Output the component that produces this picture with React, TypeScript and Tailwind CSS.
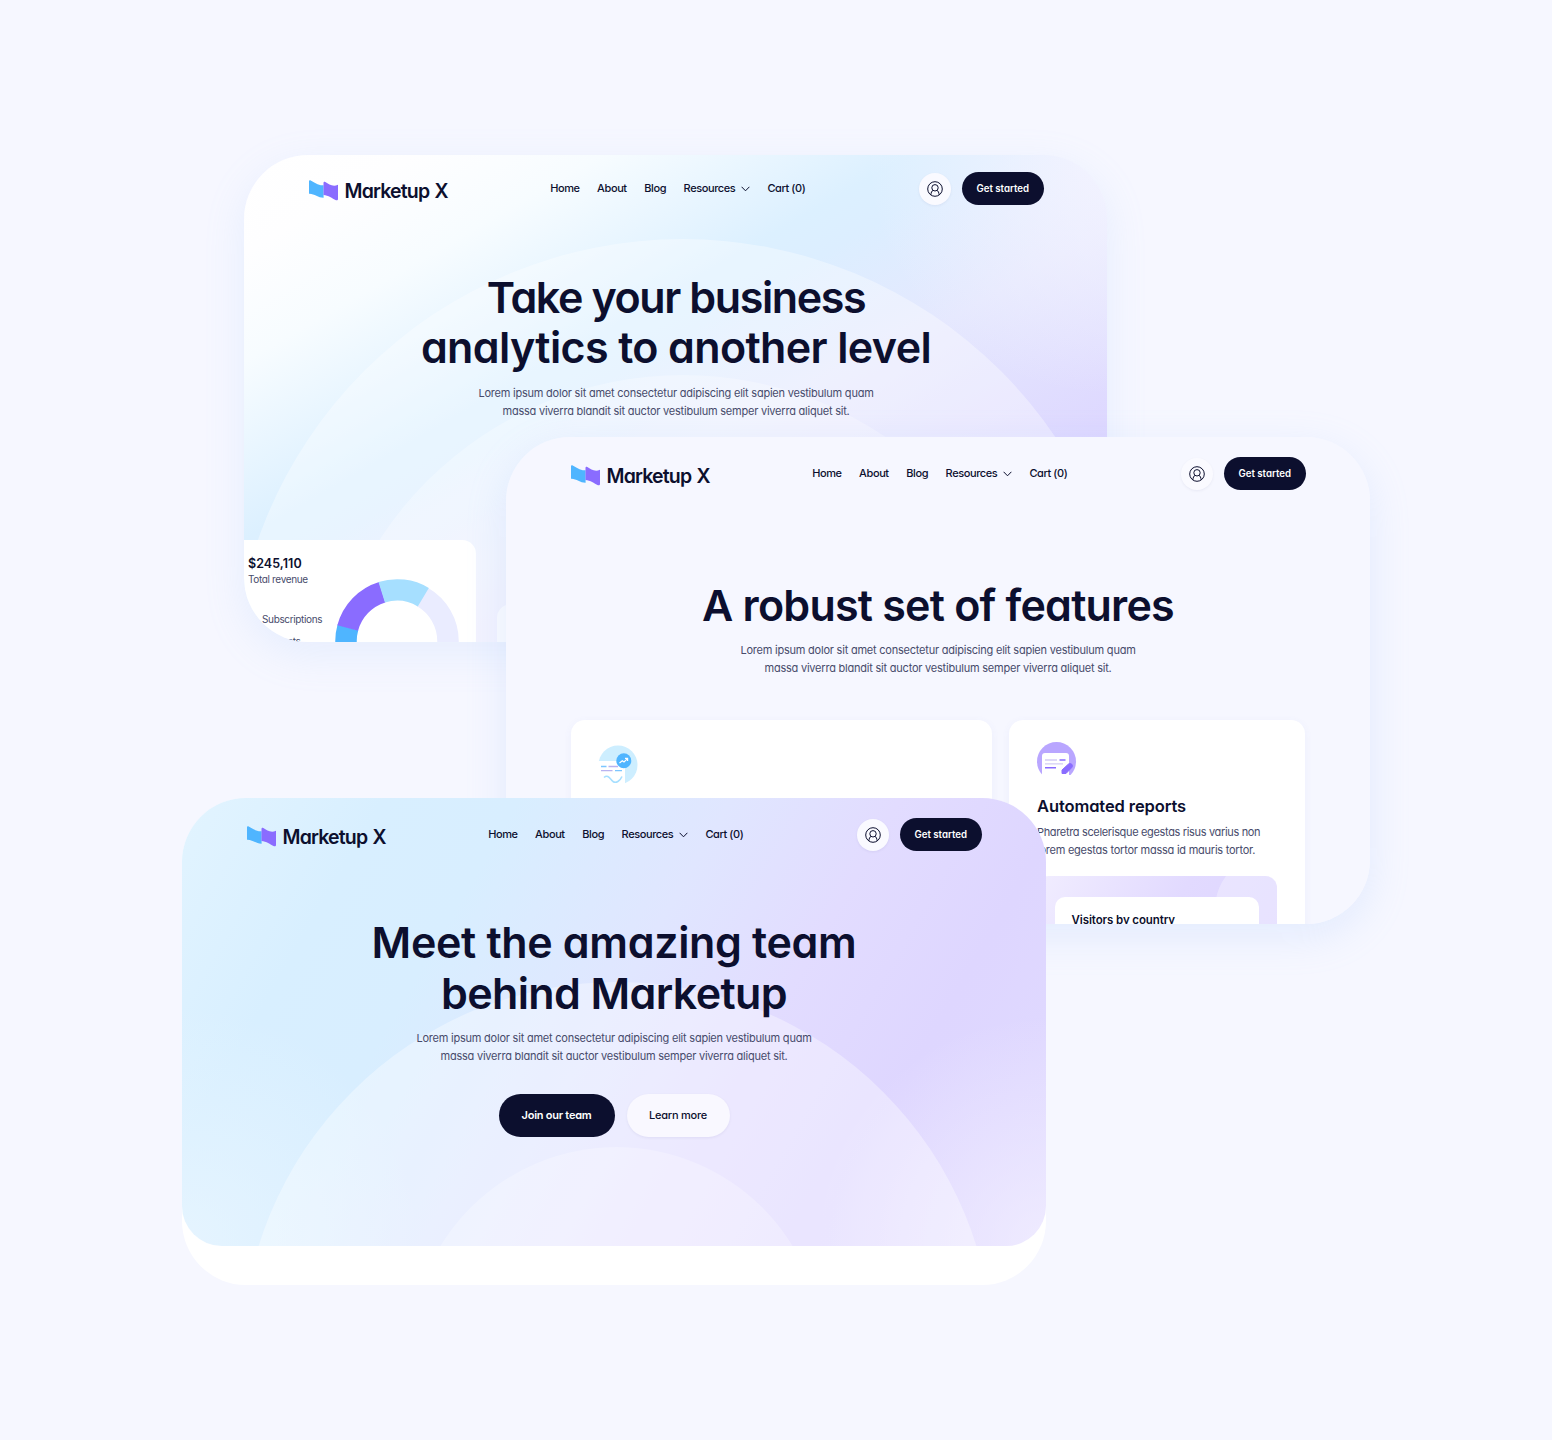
import React from "react";

const NAV = ["Home", "About", "Blog"];

function Logo() {
  return (
    <div className="flex items-center gap-[6.500px]">
      <svg width="29" height="21" viewBox="0 0 29 21" className="shrink-0">
        <path d="M0 1.500C0 .3.8-.1 1.700.4 5.500 2.300 9 5.600 14.600 5.200V17.700C9.500 17.900 5 13.300 0 13.700Z" fill="#4fb5ff" />
        <path d="M14.500 3.100C14.500 1.900 15.400 1.500 16.300 2 20 3.900 23.500 7.400 29 4.800V19C29 20.200 28 20.600 27 20.200 23 18.500 19.500 15.200 14.500 15Z" fill="#8a6cff" />
      </svg>
      <span className="whitespace-nowrap text-[19.500px] font-semibold leading-6 tracking-[-0.82px] [word-spacing:1px]">Marketup X</span>
    </div>
  );
}

function UserIcon() {
  return (
    <svg width="16" height="16" viewBox="0 0 16 16" fill="none" stroke="#0c0f2e" strokeWidth="1">
      <circle cx="8" cy="8" r="7.300" />
      <circle cx="8" cy="6.800" r="3.200" />
      <path d="M3.900 13.800C4 11.500 4.900 10 6 9.300M12.100 13.800C12 11.500 11.100 10 10 9.300" />
    </svg>
  );
}

function Header() {
  return (
    <header className="relative flex h-[33px] items-center justify-between pl-[65px] pr-[64.500px]">
      <div className="w-[200px] pt-[4px]">
        <Logo />
      </div>
      <nav className="flex items-center gap-[17.500px] whitespace-nowrap pl-[3px] text-[11px] font-medium tracking-[-0.4px]">
        {NAV.map((n) => (
          <a key={n}>{n}</a>
        ))}
        <a className="flex items-center gap-[5.500px]">
          Resources
          <svg width="9" height="6" viewBox="0 0 9 6" fill="none" stroke="#0c0f2e" strokeWidth="1">
            <path d="M.6.8 4.500 4.800 8.400.8" />
          </svg>
        </a>
        <a>Cart (0)</a>
      </nav>
      <div className="flex w-[200px] items-center justify-end gap-[11px]">
        <div className="flex size-8 items-center justify-center rounded-full bg-[#fafaff] shadow-[0_1px_3px_rgba(20,20,80,0.06)]">
          <UserIcon />
        </div>
        <button className="h-[33px] w-[81.500px] whitespace-nowrap rounded-full bg-[#0c0f2e] pt-px text-[9.700px] font-semibold text-white">
          Get started
        </button>
      </div>
    </header>
  );
}

type Line = { text: string; tracking: string };

function Intro({ lines }: { lines: Line[] }) {
  return (
    <div className="relative text-center">
      <h1 className="text-[43px] font-semibold leading-[50.500px]">
        {lines.map((l) => (
          <span key={l.text} className={`block whitespace-nowrap ${l.tracking}`}>
            {l.text}
          </span>
        ))}
      </h1>
      <p className="mt-[11px] text-[11px] leading-[18px] tracking-[-0.22px] text-[#474b6b]">
        Lorem ipsum dolor sit amet consectetur adipiscing elit sapien vestibulum quam
        <br />
        massa viverra blandit sit auctor vestibulum semper viverra aliquet sit.
      </p>
    </div>
  );
}

function Donut() {
  return (
    <svg width="124" height="63" viewBox="0 0 124 63" fill="none" strokeWidth="21.500">
      <path d="M87.500 18 A51 51 0 0 1 113 62V63" stroke="#eaecff" />
      <path d="M11 63V62 A51 51 0 0 1 12.900 48.300" stroke="#4fb5ff" />
      <path d="M12.700 49 A51 51 0 0 1 47.200 13.200" stroke="#8a6cff" />
      <path d="M46.700 13.300 A51 51 0 0 1 88.300 18.200" stroke="#a6dfff" />
    </svg>
  );
}

function AnalyticsWindow() {
  return (
    <section className="absolute left-[244px] top-[155px] h-[487px] w-[863px] overflow-hidden rounded-[64px] bg-[radial-gradient(circle_at_100%_0%,rgba(245,244,255,0.9)_0,rgba(245,244,255,0)_240px),linear-gradient(150deg,#ffffff_0%,#fefeff_10%,#f7fcff_21%,#dcf0ff_39%,#dceeff_44%,#e5e8fe_58%,#ddd6ff_80%,#dcd6ff_100%)]">
      <svg className="absolute inset-0" width="863" height="487" viewBox="0 0 863 487">
        <circle cx="438.500" cy="534" r="450" fill="#fff" fillOpacity=".36" />
        <circle cx="439" cy="582" r="362" fill="#fff" fillOpacity=".28" />
      </svg>
      <div className="w-[864px] pt-[17px]">
        <Header />
      </div>
      <div className="mt-[66.500px] w-[864px]">
        <Intro
          lines={[
            { text: "Take your business", tracking: "tracking-[-1.4px]" },
            { text: "analytics to another level", tracking: "tracking-[-0.63px]" },
          ]}
        />
      </div>
      <div className="relative mt-[120.500px] flex items-start gap-[21px]">
        <div className="flex h-[110px] w-[232px] rounded-tr-[14px] bg-white pl-1">
          <div className="w-[87px] whitespace-nowrap pt-[16px]">
            <div className="text-[12.500px] font-semibold leading-4 tracking-[0.05px]">$245,110</div>
            <div className="-mt-px text-[10px] leading-4 tracking-[-0.35px] text-[#474b6b]">Total revenue</div>
            <div className="mt-[24px] pl-[14px] text-[10px] leading-4 tracking-[-0.35px] text-[#474b6b]">Subscriptions</div>
            <div className="mt-[6px] pl-[13px] text-[10px] leading-4 tracking-[-0.35px] text-[#474b6b]">Products</div>
          </div>
          <div className="pt-[39px]">
            <Donut />
          </div>
        </div>
        <div className="mt-[64px] h-[60px] w-[200px] rounded-[14px] bg-[#fafbff]" />
      </div>
    </section>
  );
}

function ChartBadge() {
  return (
    <svg width="40" height="42" viewBox="0 0 40 42" fill="none">
      <circle cx="20" cy="20" r="19.500" fill="#cdeeff" />
      <path d="M0 17Q0 16 1 16H24Q27 16 27 19V42H0Z" fill="#fff" />
      <circle cx="25.800" cy="15.800" r="7.500" fill="#4fb5ff" />
      <path d="M21.500 18 24.300 15.800 26 17 29.500 13.600M27 13.400H29.600V16" stroke="#fff" strokeWidth="1.200" />
      <path d="M3 21.500H8.500M17 25.600H24" stroke="#7cc6ff" strokeWidth="1.300" />
      <path d="M10.500 21.500H20M3 25.600H14.500" stroke="#b9b2f0" strokeWidth="1.300" />
      <path d="M6 32.500C10 29 12 34 15 36.500 18 38.500 22 36 24 31.500" stroke="#a6dfff" strokeWidth="1.600" />
    </svg>
  );
}

function ReportBadge() {
  return (
    <svg width="40" height="42" viewBox="0 0 40 42" fill="none">
      <circle cx="19.500" cy="19.500" r="19.500" fill="#b9a6ff" />
      <path d="M5 14Q5 11 8 11H29Q32 11 32 14V40H5Z" fill="#fff" />
      <path d="M0 33H40V42H0Z" fill="#fff" />
      <path d="M8 18H20M8 21.800H26" stroke="#d4cdf5" strokeWidth="1.300" />
      <path d="M22.500 18H28.500M8 25.800H19" stroke="#8a6cff" strokeWidth="1.500" />
      <path d="M25 31.500V28L31.500 22Q33.500 20.800 35 22.500 36 24 34.800 25.500L29 31.500Z" fill="#8a6cff" stroke="#8a6cff" strokeLinejoin="round" />
    </svg>
  );
}

function FeaturesWindow() {
  return (
    <section className="absolute left-[506px] top-[437px] h-[487px] w-[864px] overflow-hidden rounded-[64px] bg-[#f6f7ff]">
      <div className="pt-[20px]">
        <Header />
      </div>
      <div className="mt-[89.500px]">
        <Intro lines={[{ text: "A robust set of features", tracking: "tracking-[-0.78px]" }]} />
      </div>
      <div className="mt-[43px] flex gap-[17px] px-[65px]">
        <div className="h-[260px] w-[421px] rounded-[14px] bg-white pl-[27px] pt-[25px] shadow-[0_2px_8px_rgba(90,110,220,0.06)]">
          <ChartBadge />
        </div>
        <div className="h-[260px] w-[296px] rounded-[14px] bg-white px-[28px] pt-[22px] shadow-[0_2px_8px_rgba(90,110,220,0.06)]">
          <ReportBadge />
          <h2 className="mt-[10px] whitespace-nowrap text-[16.500px] font-semibold leading-6 tracking-[-0.1px]">Automated reports</h2>
          <p className="mt-[5px] whitespace-nowrap text-[11px] leading-[18px] tracking-[-0.34px] text-[#474b6b]">
            Pharetra scelerisque egestas risus varius non
            <br />
            <span className="tracking-[-0.24px]">lorem egestas tortor massa id mauris tortor.</span>
          </p>
          <div className="relative mt-[17px] h-[120px] overflow-hidden rounded-[12px] bg-[linear-gradient(120deg,#f1edff,#e2daff_50%,#dcd5ff)] px-[18px] pt-[21px]">
            <div className="absolute left-[178px] top-[-22px] size-[110px] rounded-full bg-white/30" />
            <div className="relative h-[90px] rounded-[10px] bg-white px-[16.500px] pt-[15px] text-[11.500px] font-semibold leading-4 tracking-[-0.1px]">
              Visitors by country
            </div>
          </div>
        </div>
      </div>
    </section>
  );
}

function TeamWindow() {
  return (
    <section className="absolute left-[182px] top-[798px] h-[487px] w-[864px] overflow-hidden rounded-[64px] bg-white">
      <div className="relative h-[447.500px] overflow-hidden rounded-b-[40px] bg-[radial-gradient(circle_at_0%_100%,rgba(238,248,255,0.6)_0,rgba(238,248,255,0)_240px),radial-gradient(circle_at_100%_100%,rgba(245,242,255,0.7)_0,rgba(245,242,255,0)_230px),linear-gradient(120deg,#e2f4ff_0%,#d8efff_18%,#d8eeff_30%,#e0e6ff_49%,#e2dcff_64%,#ded6ff_79%,#e0daff_100%)]">
        <svg className="absolute inset-0" width="864" height="448" viewBox="0 0 864 448">
          <circle cx="435.500" cy="560" r="376" fill="#fff" fillOpacity=".36" />
          <circle cx="434.500" cy="555" r="206" fill="#fff" fillOpacity=".25" />
        </svg>
        <div className="pt-[20px]">
          <Header />
        </div>
        <div className="mt-[66px]">
          <Intro
            lines={[
              { text: "Meet the amazing team", tracking: "tracking-[-0.35px]" },
              { text: "behind Marketup", tracking: "tracking-[-0.63px]" },
            ]}
          />
        </div>
        <div className="relative mt-[28.500px] flex justify-center gap-[12px] whitespace-nowrap text-[11px] tracking-[-0.25px]">
          <button className="h-[43px] w-[116px] rounded-full bg-[#0c0f2e] pt-px font-semibold text-white">Join our team</button>
          <button className="h-[43px] w-[103px] rounded-full bg-[#f9f8ff] pt-px font-medium shadow-[0_1px_3px_rgba(20,20,80,0.06)]">
            Learn more
          </button>
        </div>
      </div>
    </section>
  );
}

export default function App() {
  return (
    <main className="relative h-[1440px] w-[1552px] overflow-hidden bg-[#f6f7ff] font-['Inter',sans-serif] text-[#0c0f2e] [font-feature-settings:'cv11']">
      <div className="absolute left-[244px] top-[155px] h-[487px] w-[863px] rounded-[64px] shadow-[0_12px_40px_rgba(150,190,250,0.16)]" />
      <AnalyticsWindow />
      <div className="absolute left-[506px] top-[437px] h-[487px] w-[864px] rounded-[64px] shadow-[0_12px_40px_rgba(150,190,250,0.2)]" />
      <FeaturesWindow />
      <TeamWindow />
    </main>
  );
}
